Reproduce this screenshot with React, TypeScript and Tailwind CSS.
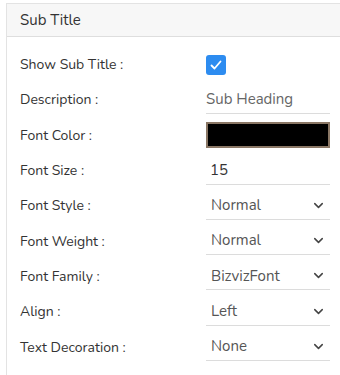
import React from 'react';
import { ChevronDown } from 'lucide-react';

const selects = [
    { label: "Font Style :", value: "Normal" },
    { label: "Font Weight :", value: "Normal" },
    { label: "Font Family :", value: "BizvizFont" },
    { label: "Align :", value: "Left" },
    { label: "Text Decoration :", value: "None" },
];

const Row: React.FC<{ label: string; children: React.ReactNode }> = ({ label, children }) => (
    <div className="flex items-center h-[35.3px]">
        <div className="w-[199px] pl-[13px] text-[14px] text-[#333]">{label}</div>
        <div className="w-[124px]">{children}</div>
    </div>
);

const App: React.FC = () => {
    return (
        <div className="w-[340px] h-[375px] bg-white pl-[6px] pt-[3px]" style={{ fontFamily: '"Nunito", Lato, "Open Sans", sans-serif' }}>
            <div className="h-full border-l border-t border-[#e3e3e3]">
                <div className="h-[33px] bg-[#f7f7f7] border-b border-[#dedede] flex items-center pl-[13px] text-[15px] text-[#333]">
                    Sub Title
                </div>
                <div className="pt-[10px]">
                    <Row label="Show Sub Title :">
                        <div className="w-[20px] h-[20px] rounded-[3px] bg-[#2d8cf0] flex items-center justify-center">
                            <svg width="14" height="14" viewBox="0 0 14 14" fill="none">
                                <path d="M2.5 7.5 L5.5 10.5 L11.5 3.5" stroke="white" strokeWidth="1.8" strokeLinecap="round" strokeLinejoin="round" />
                            </svg>
                        </div>
                    </Row>
                    <Row label="Description :">
                        <div className="h-[28px] border-b border-[#dcdcdc] flex items-center text-[15px] text-[#666]">Sub Heading</div>
                    </Row>
                    <Row label="Font Color :">
                        <div className="h-[26px] border-2 border-[#8a7765] bg-black"></div>
                    </Row>
                    <Row label="Font Size :">
                        <div className="h-[28px] border-b border-[#dcdcdc] flex items-center pl-[4px] text-[15px] text-[#333]">15</div>
                    </Row>
                    {selects.map((s, i) => (
                        <Row key={i} label={s.label}>
                            <div className="h-[28px] border-b border-[#dcdcdc] flex items-center justify-between pl-[5px] pr-[4px] text-[15px] text-[#555]">
                                <span>{s.value}</span>
                                <ChevronDown size={15} strokeWidth={2.4} className="text-[#444]" />
                            </div>
                        </Row>
                    ))}
                </div>
            </div>
        </div>
    );
};

export default App;
